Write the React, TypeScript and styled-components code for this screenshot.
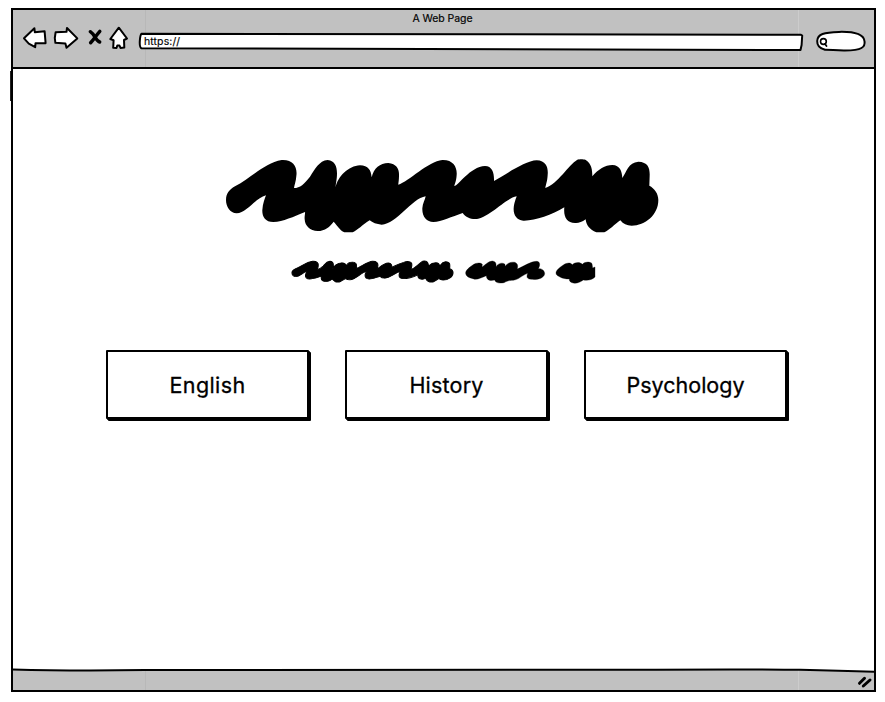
import React from "react";
import styled, { createGlobalStyle } from "styled-components";

const GlobalStyle = createGlobalStyle`
  * { box-sizing: border-box; }
  body { margin: 0; background: #fff; font-family: Inter, "Liberation Sans", Arial, sans-serif; color: #000; }
`;

const Page = styled.div`
  width: 885px;
  height: 702px;
  padding: 8px 9px 10px 11px;
  overflow: hidden;
`;

const Frame = styled.div`
  height: 684px;
  display: flex;
  flex-direction: column;
  border: 2px solid #000;
`;

const seams = `linear-gradient(#b8b8b8, #b8b8b8) 132px 0 / 1px 100% no-repeat,
  linear-gradient(#cccccc, #cccccc) 785px 0 / 1px 100% no-repeat, #c1c1c1`;

const Header = styled.header`
  height: 59px;
  flex: none;
  background: ${seams};
  border-bottom: 2px solid #000;
`;

const Title = styled.div`
  height: 17px;
  padding: 2px 2px 0 0;
  text-align: center;
  font-size: 10.5px;
  line-height: 14px;
  letter-spacing: -0.05px;
  -webkit-text-stroke: 0.15px #000;
`;

const Toolbar = styled.div`
  display: flex;
  align-items: flex-start;
  padding-left: 9px;
`;

const Art = styled.svg<{ $left?: number; $top?: number }>`
  display: block;
  flex: none;
  overflow: visible;
  margin-left: ${(p) => p.$left ?? 0}px;
  margin-top: ${(p) => p.$top ?? 0}px;
`;

const Address = styled.div`
  display: grid;
  width: 665px;
  height: 19px;
  margin: 5px 0 0 9px;
  > * { grid-area: 1 / 1; }
`;

const Url = styled.span`
  z-index: 1;
  padding: 1px 0 0 6px;
  font-size: 10.5px;
  line-height: 18px;
  letter-spacing: 0.1px;
  -webkit-text-stroke: 0.15px #000;
`;

const Content = styled.main`
  flex: 1;
  display: flex;
  flex-direction: column;
  align-items: flex-start;
`;

const EdgeStroke = styled.div`
  width: 1px;
  height: 30px;
  margin: 2px 0 -32px -3px;
  background: #222;
`;

const Subtitle = styled.div`
  display: flex;
  margin: 21px 0 0 279px;
  stroke: #000;
`;

const Subjects = styled.nav`
  display: flex;
  gap: 36px;
  margin: 67px 0 0 93px;
`;

const Subject = styled.button<{ $spacing: number }>`
  width: 203px;
  height: 69px;
  padding: 0;
  border: 2px solid #000;
  border-radius: 1px;
  box-shadow: 1px 1px 0 #000, 2px 2px 0 #000;
  background: #fff;
  color: #000;
  font: 21.5px/26px Inter, "Liberation Sans", Arial, sans-serif;
  letter-spacing: ${(p) => p.$spacing}px;
  -webkit-text-stroke: 0.3px #000;
`;

const Footer = styled.footer`
  height: 21px;
  flex: none;
  display: grid;
  background: ${seams};
`;

const ink = { stroke: "#000", strokeWidth: 2, strokeLinejoin: "round", strokeLinecap: "round" } as const;

const SCRIBBLE =
  "M33 150C33 130 42 120 60 109C110 83 150 38 200 30C235 28 248 52 244 78C243 95 238 105 237 114C255 114 268 102 285 80C300 58 312 32 338 30C360 32 366 50 366 70C366 90 362 100 362 112C368 80 400 48 435 46C460 47 468 60 470 82C476 55 495 39 520 39C545 41 553 58 552 76C552 92 550 98 550 104C580 95 640 34 682 30C715 29 727 52 725 75C724 95 718 104 718 108C730 108 765 50 810 48C832 48 838 70 837 93C870 75 930 32 965 31C995 32 1000 55 998 75C997 95 992 105 991 114C1030 100 1060 45 1087 29C1092 27 1105 27 1111 29C1130 40 1132 60 1132 79C1150 58 1170 45 1192 45C1215 45 1221 65 1222 84C1235 65 1240 37 1270 35C1300 36 1305 55 1304 78L1303 107C1318 115 1330 130 1330 150C1330 195 1290 227 1250 227C1235 227 1225 222 1216 211C1200 222 1180 243 1168 247L1144 247C1125 240 1113 225 1112 208C1100 217 1090 220 1080 219C1055 218 1045 200 1048 172C1010 195 960 213 925 212C905 210 895 195 896 175C897 160 903 145 905 139C870 145 820 207 780 207C765 207 752 202 743 189C710 200 680 215 655 216C635 215 621 200 622 175C623 160 630 150 632 139C590 145 545 223 500 224C485 223 472 218 464 211C445 222 425 243 413 247L388 247C375 241 365 225 356 215C345 230 330 243 308 243C285 243 270 228 269 208C268 198 271 190 270 186C235 200 205 215 175 216C150 216 141 198 142 180C143 160 150 145 153 136C120 145 95 190 65 190C45 189 33 170 33 150Z";

const SUBJECTS = [
  { name: "English", spacing: 0.4 },
  { name: "History", spacing: 0.2 },
  { name: "Psychology", spacing: 0 },
];

export default function App() {
  return (
    <>
      <GlobalStyle />
      <Page>
        <Frame>
          <Header>
            <Title>A Web Page</Title>
            <Toolbar>
              <Art width="26" height="24" viewBox="22 27 26 24">
                <path {...ink} fill="#fff" d="M24 38.3L34.4 28.3L34.8 32.2L44.6 31.2L45.6 43.2L35.5 43.3L35.2 47.2L28.8 43.7Z" />
              </Art>
              <Art $left={5} width="26" height="24" viewBox="53 27 26 24">
                <path {...ink} fill="#fff" d="M55.6 32.3L66.5 31.8L67 28L77.3 38.4L66.5 47.8L65.4 43.4L55.4 42.8L54.8 38Z" />
              </Art>
              <Art $left={8} width="18" height="22" viewBox="87 27 18 22">
                <path
                  fill="none" stroke="#000" strokeWidth="3.4" strokeLinecap="round"
                  d="M90.3 31.7Q93 33.5 95.2 37.4T99.7 42M99.8 31.3Q97 34.5 94.9 37.5T90.6 42.8"
                />
              </Art>
              <Art $left={3} width="21" height="24" viewBox="108 27 21 24">
                <path {...ink} fill="#fff" d="M118.8 27.7L127 38.5L124 40L124.3 47.5L120.5 48L119.5 45.5L117.3 45.5L116.5 48L113.2 47.7L113.6 40.2L110.3 39Z" />
              </Art>
              <Address>
                <Art width="665" height="19" viewBox="138 32 665 19">
                  <path {...ink} fill="#fff" d="M141.5 33.8Q380 34 490 34.3T801 34.8L802.2 35.5L801.6 45L800.5 50Q500 49.3 141.5 48.2Q139.4 47.5 139.8 41Q140.2 35 141.5 33.8Z" />
                </Art>
                <Url>https://</Url>
              </Address>
              <Art $left={12} $top={3} width="52" height="22" viewBox="815 30 52 22">
                <path {...ink} fill="#fff" d="M817.2 41C817.5 34 824 32.3 839 31.9C855 31.5 863.5 34 864.5 41C865.5 47 862 50.5 845 50.5C835 50.6 832 49.7 825 49.8C820 48.5 817 46 817.2 41Z" />
                <circle cx="823.4" cy="41.5" r="2.9" fill="none" stroke="#000" strokeWidth="1.6" />
                <path {...ink} strokeWidth="1.8" fill="none" d="M825 44L826.5 46" />
              </Art>
            </Toolbar>
          </Header>
          <Content>
            <EdgeStroke />
            <Art $left={202} $top={81} width="460" height="90" viewBox="0 0 1380 270">
              <path d={SCRIBBLE} />
            </Art>
            <Subtitle>
              <Art width="161" height="21" viewBox="33 27 1297 220" preserveAspectRatio="none">
                <path strokeWidth="9" d={SCRIBBLE} />
              </Art>
              <Art $left={13} width="78" height="22" viewBox="76 32 234 66">
                <path strokeWidth="1" d="M75 68C75 60 85 52 95 45C105 37 120 36 125 42L124 50C134 44 142 33 155 32C165 34 167 38 166 49C172 39 186 35 193 42L193 48C200 38 212 34 222 36C232 40 232 46 230 56C250 48 270 33 288 33C299 34 299 44 293 55C305 54 312 62 312 70C310 84 290 89 272 87C258 86 257 80 261 69C245 74 235 88 218 90C205 90 200 92 190 97C178 99 165 99 162 89C148 92 138 90 137 76C122 82 108 90 97 85C82 82 75 76 75 68Z" />
              </Art>
              <Art $left={12} width="39" height="22" viewBox="346 32 117 66">
                <path strokeWidth="1" d="M346 68C346 60 356 52 368 44C378 37 390 36 395 43C402 36 418 34 425 42C432 34 448 33 454 40L456 53L463 50L463 80C455 88 440 92 428 89C418 96 408 100 398 98C390 97 385 92 386 86C375 86 365 84 358 80C350 76 346 74 346 68Z" />
              </Art>
            </Subtitle>
            <Subjects>
              {SUBJECTS.map((s) => (
                <Subject key={s.name} $spacing={s.spacing}>{s.name}</Subject>
              ))}
            </Subjects>
          </Content>
          <Footer>
            <Art width="861" height="21" viewBox="13 669 861 21">
              <path fill="#fff" d="M13 668H874V672Q830 670.5 800 670L13 670Z" />
              <path fill="none" stroke="#000" strokeWidth="2" d="M13 669.4Q70 671 145 670L600 669.8Q760 669 800 669.8Q840 671 874 671.7" />
              <path {...ink} strokeWidth="3" d="M859.5 683.3L864.5 678.3M863.3 686L870 680" />
            </Art>
          </Footer>
        </Frame>
      </Page>
    </>
  );
}
